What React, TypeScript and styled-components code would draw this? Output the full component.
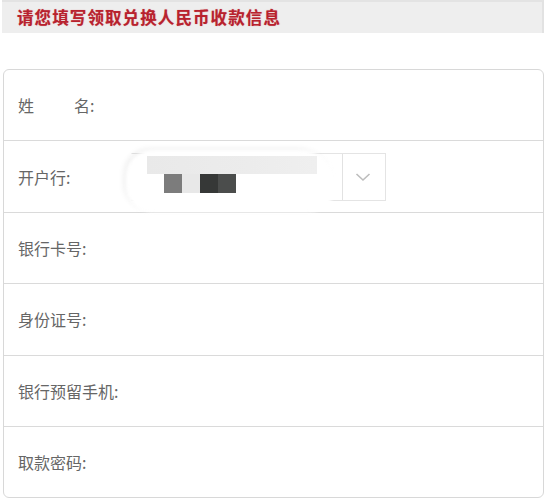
import React from "react";
import styled, { createGlobalStyle } from "styled-components";

const Global = createGlobalStyle`
  html, body { margin: 0; padding: 0; background: #ffffff; }
  body { font-family: "Noto Sans CJK SC", "Noto Sans", sans-serif; }
`;

const Page = styled.div`
  width: 551px;
  height: 500px;
  overflow: hidden;
  background: #ffffff;
`;

const Banner = styled.div`
  box-sizing: border-box;
  margin-left: 2px;
  width: 542px;
  height: 33px;
  background: #eeeeee;
  border-top: 2px solid #e3e3e3;
  border-right: 2px solid #e2e2e2;
  display: flex;
  align-items: center;
  padding-left: 15px;
  padding-bottom: 1px;
`;

const BannerText = styled.span`
  font-size: 16.5px;
  font-weight: 700;
  color: #b8222e;
  letter-spacing: 1.1px;
  text-shadow: 0 0 1px rgba(200, 40, 50, 0.5);
`;

const Card = styled.div`
  box-sizing: border-box;
  margin: 36px 0 0 3px;
  width: 541px;
  border: 1px solid #d8d8d8;
  border-radius: 6px;
  display: flex;
  flex-direction: column;
`;

const Row = styled.div`
  position: relative;
  box-sizing: border-box;
  height: 71.4px;
  display: flex;
  align-items: center;
  padding-left: 14px;
  border-bottom: 1px solid #dadada;
  &:last-child { border-bottom: none; height: 70px; }
`;

const Label = styled.span<{ $w?: number }>`
  font-size: 16px;
  color: #666666;
  display: inline-flex;
  align-items: center;
  width: ${(p) => (p.$w ? `${p.$w}px` : "auto")};
  flex-shrink: 0;
`;

const Gap = styled.span<{ $w: number }>`
  display: inline-block;
  width: ${(p) => p.$w}px;
`;

const Select = styled.div`
  position: relative;
  box-sizing: border-box;
  margin-left: 49px;
  width: 255px;
  height: 48px;
  border: 1px solid #e4e4e4;
  border-left-color: transparent;
  display: flex;
`;

const SelectValue = styled.div`
  flex: 1;
  border-right: 1px solid #e2e2e2;
`;

const SelectArrow = styled.div`
  width: 39px;
  display: flex;
  align-items: center;
  justify-content: center;
  padding-right: 3px;
  padding-top: 1px;
`;

const Blob = styled.div`
  position: absolute;
  left: -6px;
  top: -4px;
  width: 210px;
  height: 62px;
  border-radius: 30px 40px 30px 30px;
  background: #ffffff;
  box-shadow: -3px -2px 4px rgba(0, 0, 0, 0.06);
  filter: blur(1.5px);
`;

const Redact = styled.div`
  position: absolute;
  left: 15px;
  top: 2px;
  width: 170px;
  display: flex;
  flex-direction: column;
  filter: blur(0.6px);
`;

const RedactBar = styled.div`
  height: 18px;
  width: 170px;
  background: linear-gradient(90deg, #e9e9e9, #ececec 60%, #efefef);
`;

const RedactSquares = styled.div`
  display: flex;
  margin-left: 17px;
  height: 19px;
`;

const Square = styled.div<{ $c: string }>`
  width: 18px;
  height: 19px;
  background: ${(p) => p.$c};
`;

const Chevron = () => (
  <svg width="16" height="10" viewBox="0 0 16 10">
    <path d="M1.5 2 L8 8 L14.5 2" fill="none" stroke="#bdbdbd" strokeWidth="1.6" />
  </svg>
);

const fields = ["银行卡号:", "身份证号:", "银行预留手机:", "取款密码:"];

export default function App() {
  return (
    <Page>
      <Global />
      <Banner>
        <BannerText>请您填写领取兑换人民币收款信息</BannerText>
      </Banner>
      <Card>
        <Row>
          <Label>
            姓<Gap $w={40} />名:
          </Label>
        </Row>
        <Row>
          <Label $w={64}>开户行:</Label>
          <Select>
            <SelectValue />
            <SelectArrow>
              <Chevron />
            </SelectArrow>
            <Blob />
            <Redact>
              <RedactBar />
              <RedactSquares>
                <Square $c="#7c7c7c" />
                <Square $c="#e8e8e8" />
                <Square $c="#363837" />
                <Square $c="#4b4d4c" />
              </RedactSquares>
            </Redact>
          </Select>
        </Row>
        {fields.map((f) => (
          <Row key={f}>
            <Label>{f}</Label>
          </Row>
        ))}
      </Card>
    </Page>
  );
}
